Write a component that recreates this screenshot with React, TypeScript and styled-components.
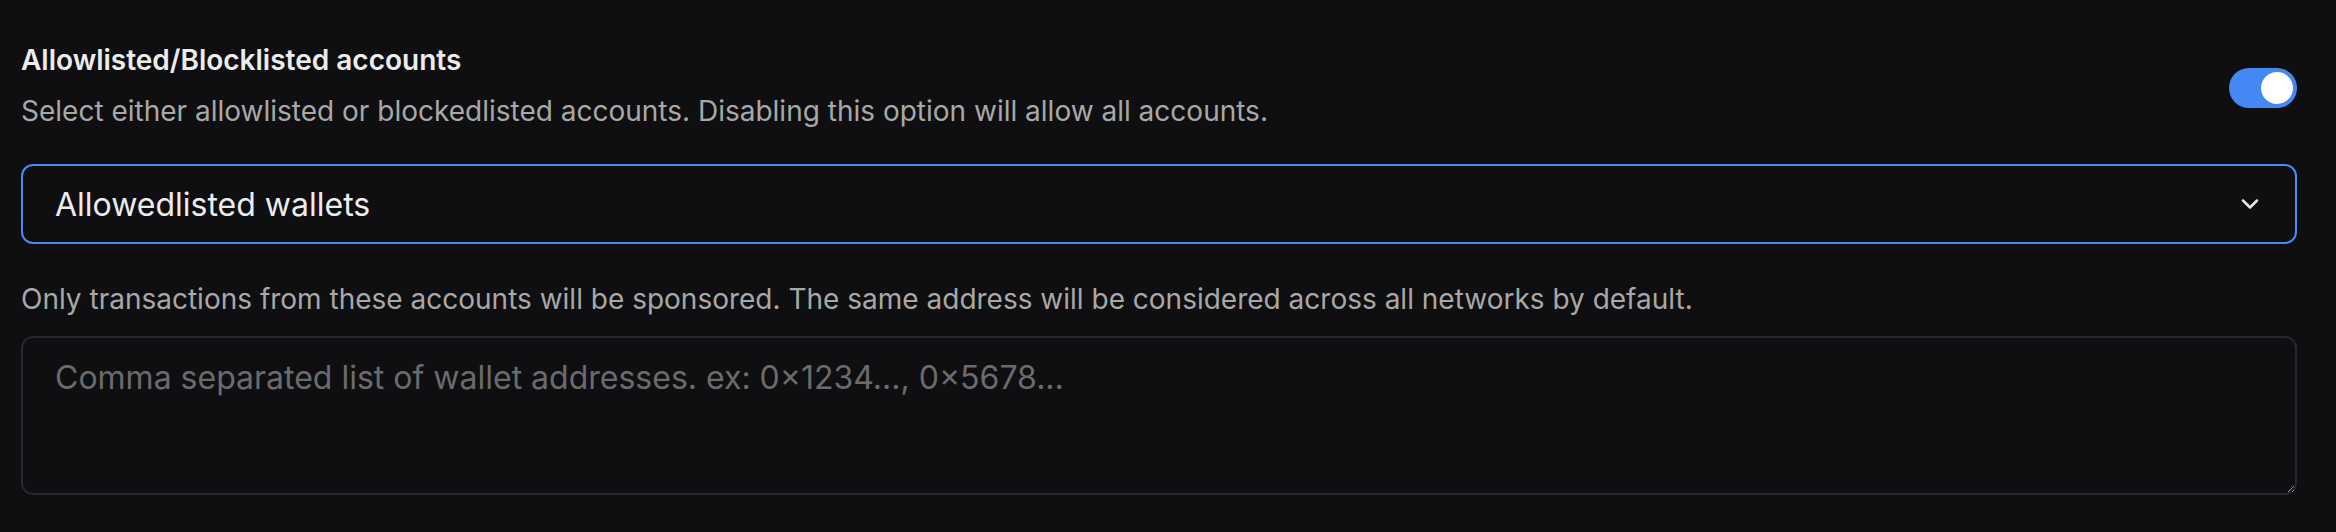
import styled, { createGlobalStyle } from 'styled-components';
import { ChevronDown } from 'lucide-react';

const GlobalStyle = createGlobalStyle`
  html, body {
    margin: 0;
    background: #0f0f11;
  }

  body {
    font-family: Inter, "Noto Sans", sans-serif;
    -webkit-font-smoothing: antialiased;
  }
`;

const App: React.FC = () => {
  return (
    <>
      <GlobalStyle />
      <Wrapper>
        <Header>
          <div>
            <Title>Allowlisted/Blocklisted accounts</Title>
            <Muted $top={15}>
              Select either allowlisted or blockedlisted accounts. Disabling this option will allow all accounts.
            </Muted>
          </div>
          <Toggle type='button' role='switch' aria-checked $on>
            <Knob />
          </Toggle>
        </Header>

        <SelectTrigger type='button'>
          <span>Allowedlisted wallets</span>
          <ChevronDown size={28} strokeWidth={2.2} color='#e6e6e6' />
        </SelectTrigger>

        <Muted $top={37}>
          Only transactions from these accounts will be sponsored. The same address will be considered across all networks by default.
        </Muted>

        <Addresses placeholder='Comma separated list of wallet addresses. ex: 0×1234..., 0×5678...' />
      </Wrapper>
    </>
  );
};

const Wrapper = styled.section`
  display: flex;
  flex-direction: column;
  padding: 42px 39px 36px 21px;
`;

const Header = styled.div`
  display: flex;
  justify-content: space-between;
  align-items: flex-start;
`;

const Title = styled.h3`
  margin: 0;
  font-size: 28px;
  line-height: 36px;
  font-weight: 600;
  color: #ececec;
`;

const Muted = styled.p<{ $top: number }>`
  margin: ${(p) => p.$top}px 0 0;
  font-size: 28px;
  line-height: 36px;
  font-weight: 400;
  color: #a8a8a8;
`;

const Toggle = styled.button<{ $on?: boolean }>`
  display: flex;
  justify-content: ${(p) => (p.$on ? 'flex-end' : 'flex-start')};
  align-items: center;
  box-sizing: border-box;
  width: 68px;
  height: 40px;
  margin-top: 26px;
  padding: 4px;
  border: none;
  border-radius: 20px;
  background-color: ${(p) => (p.$on ? '#4488f3' : '#3a3b40')};
  cursor: pointer;
`;

const Knob = styled.span`
  display: block;
  width: 32px;
  height: 32px;
  border-radius: 50%;
  background: #ffffff;
`;

const SelectTrigger = styled.button`
  display: flex;
  justify-content: space-between;
  align-items: center;
  box-sizing: border-box;
  width: 100%;
  height: 80px;
  margin-top: 35px;
  padding: 0 31px 0 32px;
  border: 2px solid #4a8af4;
  border-radius: 12px;
  background: transparent;
  font-family: inherit;
  font-size: 32px;
  color: #ececec;
  text-align: left;
  cursor: pointer;
`;

const Addresses = styled.textarea`
  display: block;
  box-sizing: border-box;
  width: 100%;
  height: 159px;
  margin-top: 19px;
  padding: 18px 32px;
  border: 2px solid #26282d;
  border-radius: 12px;
  background: transparent;
  font-family: inherit;
  font-size: 32px;
  line-height: 44px;
  color: #ececec;
  color-scheme: dark;
  resize: vertical;
  outline: none;

  &::placeholder {
    color: #6b6b6e;
  }
`;

export default App;
